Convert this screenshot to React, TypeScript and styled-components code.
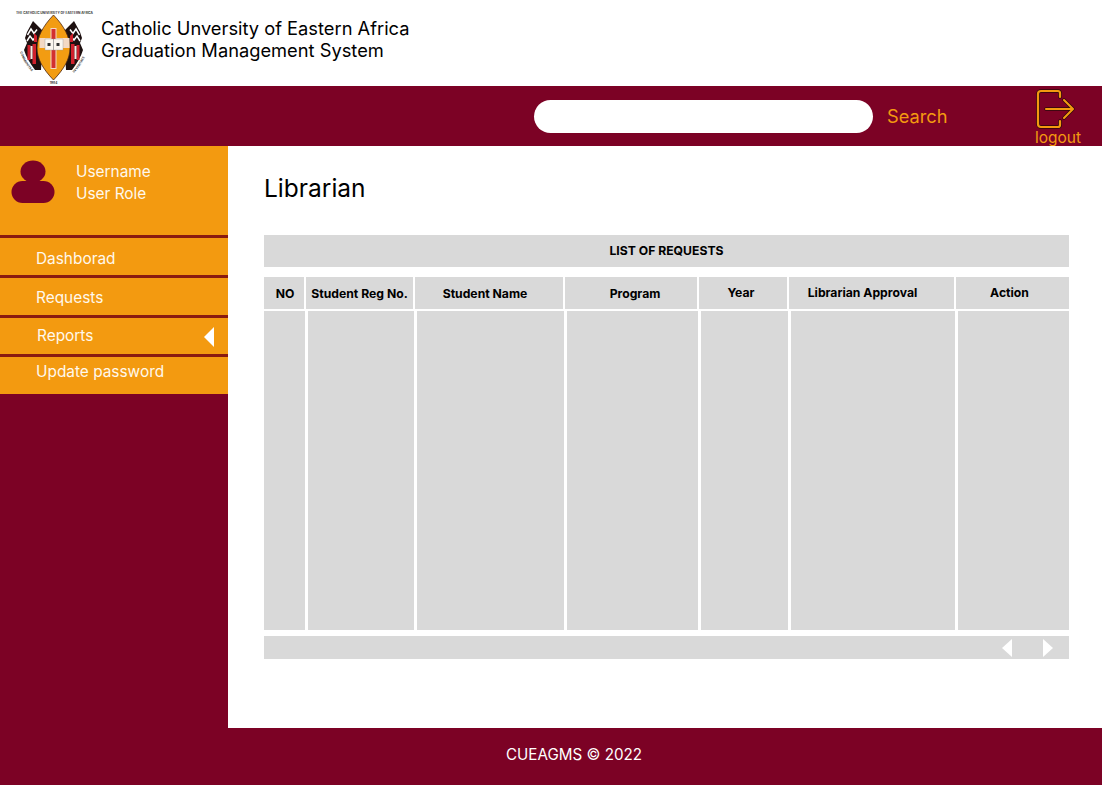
import styled, { createGlobalStyle } from "styled-components";

const MAROON = "#7c0225";
const ORANGE = "#f39a10";
const GREY = "#d9d9d9";

// shift = how far the label sits off the middle of its column, up = lifted label
const columns = [
  { label: "NO", shift: 1, up: false },
  { label: "Student Reg No.", shift: 0, up: false },
  { label: "Student Name", shift: -4, up: false },
  { label: "Program", shift: 4, up: false },
  { label: "Year", shift: -2, up: true },
  { label: "Librarian Approval", shift: -9, up: true },
  { label: "Action", shift: -3, up: true },
];

const menu = [
  { label: "Dashborad", height: 40, top: 11, left: 36 },
  { label: "Requests", height: 40, top: 10, left: 36 },
  { label: "Reports", height: 39, top: 8, left: 37 },
  { label: "Update password", height: 40, top: 5, left: 36 },
];

function Wing() {
  return (
    <g>
      <path d="M21 13l10 10-2 39h-6C18 55 14 49 12 42l3-7-2-5 2-6z" fill="#1d1010" />
      <path d="M15.5 27l3.5-6 3 4.5 3-4" fill="none" stroke="#fff" strokeWidth="1.5" />
      <path d="M15 33l3-5 3 4 3.5-4" fill="none" stroke="#fff" strokeWidth="1.5" />
      <path d="M15.5 37h3v15h-3zM20.5 36H24v20h-3.5z" fill="#d0202c" />
      <path d="M18.5 38h2v13h-2z" fill="#f3ece4" />
      <path d="M22 25l3 3v6h-3z" fill="#d0202c" />
    </g>
  );
}

function Logo() {
  return (
    <svg width="84" height="76" viewBox="0 0 84 76">
      <text x="4" y="6" textLength="77" lengthAdjust="spacingAndGlyphs" fontSize="2.9" fontWeight="700" fontFamily="Inter, sans-serif" fill="#333">
        THE CATHOLIC UNIVERSITY OF EASTERN AFRICA
      </text>
      <defs>
        <path id="leftArc" d="M8 44C11 52 15 59 21 65" />
        <path id="rightArc" d="M62 65C68 59 72 52 75 44" />
      </defs>
      <text fontSize="3.2" fontWeight="700" fontFamily="Inter, sans-serif" fill="#444">
        <textPath href="#leftArc">COMMUNITAS</textPath>
      </text>
      <text fontSize="3.2" fontWeight="700" fontFamily="Inter, sans-serif" fill="#444">
        <textPath href="#rightArc">IN VERITATE</textPath>
      </text>
      <Wing />
      <g transform="translate(83 0) scale(-1 1)">
        <Wing />
      </g>
      <path d="M41.5 7C31 18 25 29 25 40s6 21 16.5 32C52 61 58 51 58 40S52 18 41.5 7z" fill="#f29c12" stroke="#4a2410" strokeWidth=".8" />
      <path d="M38.5 20h6v10h13v10h-13v21h-6V40h-11V30h11z" fill="#f3d9c4" />
      <path d="M39.5 21h4v39h-4z" fill="#d3302f" />
      <path d="M33 31h18v11H33z" fill="#fbf7f0" stroke="#999" strokeWidth=".4" />
      <path d="M41.5 31v11" stroke="#777" strokeWidth=".6" />
      <path d="M35.5 35h3v3h-3zM44.5 35h3v3h-3z" fill="#333" />
      <text x="41.5" y="75.5" textAnchor="middle" fontSize="3.2" fontWeight="700" fontFamily="Inter, sans-serif" fill="#333">
        1984
      </text>
    </svg>
  );
}

function UserIcon() {
  return (
    <svg width="44" height="44" viewBox="0 0 44 44">
      <ellipse cx="22" cy="11.5" rx="12.5" ry="11" fill={MAROON} />
      <rect x="0.5" y="21" width="43" height="22" rx="11" fill={MAROON} />
    </svg>
  );
}

function LogoutIcon() {
  const door = "M24 8V4a2 2 0 0 0-2-2H5a3 3 0 0 0-3 3v30a3 3 0 0 0 3 3h17a2 2 0 0 0 2-2v-4";
  const arrow = "M10 20h26M28 11l9 9-9 9";
  return (
    <svg width="40" height="40" viewBox="0 0 40 40">
      <path d={door} fill="none" stroke="#2b0a0a" strokeWidth="3.6" strokeLinecap="round" />
      <path d={arrow} fill="none" stroke="#2b0a0a" strokeWidth="3.4" strokeLinecap="round" strokeLinejoin="round" />
      <path d={door} fill="none" stroke={ORANGE} strokeWidth="2.2" strokeLinecap="round" />
      <path d={arrow} fill="none" stroke={ORANGE} strokeWidth="2.1" strokeLinecap="round" strokeLinejoin="round" />
    </svg>
  );
}

export default function App() {
  return (
    <>
      <GlobalStyle />
      <Page>
        <Header>
          <LogoBox>
            <Logo />
          </LogoBox>
          <Brand>
            Catholic Unversity of Eastern Africa
            <br />
            Graduation Management System
          </Brand>
        </Header>
        <TopBar>
          <SearchInput />
          <SearchLabel>Search</SearchLabel>
          <Logout>
            <LogoutIcon />
            <span>logout</span>
          </Logout>
        </TopBar>
        <Body>
          <Sidebar>
            <Profile>
              <UserIcon />
              <ProfileText>
                Username
                <br />
                User Role
              </ProfileText>
            </Profile>
            <Menu>
              {menu.map((item) => (
                <MenuItem key={item.label} $height={item.height} $top={item.top} $left={item.left}>
                  {item.label}
                  {item.label === "Reports" && <ReportsArrow />}
                </MenuItem>
              ))}
            </Menu>
          </Sidebar>
          <Main>
            <Title>Librarian</Title>
            <ListBar>LIST OF REQUESTS</ListBar>
            <HeadRow>
              {columns.map((c) => (
                <HeadCell key={c.label} $shift={c.shift} $up={c.up}>
                  {c.label}
                </HeadCell>
              ))}
            </HeadRow>
            <BodyRow>
              {columns.map((c) => (
                <BodyCell key={c.label} />
              ))}
            </BodyRow>
            <Pager>
              <PagerLeft />
              <PagerRight />
            </Pager>
          </Main>
        </Body>
        <Footer>CUEAGMS © 2022</Footer>
      </Page>
    </>
  );
}

const GlobalStyle = createGlobalStyle`
  html, body {
    margin: 0;
    padding: 0;
    background: #fff;
  }
  * {
    box-sizing: border-box;
  }
`;

const Page = styled.div`
  width: 1102px;
  height: 785px;
  display: flex;
  flex-direction: column;
  overflow: hidden;
  font-family: Inter, "Liberation Sans", sans-serif;
`;

const Header = styled.header`
  height: 86px;
  display: flex;
  align-items: center;
  background: #fff;
`;

const LogoBox = styled.div`
  width: 101px;
  height: 82px;
  padding: 6px 0 0 12px;
`;

const Brand = styled.div`
  font-size: 18.3px;
  line-height: 22.5px;
  color: #000;
  margin-top: -8px;
`;

const TopBar = styled.div`
  height: 60px;
  display: flex;
  align-items: center;
  background: ${MAROON};
  padding-left: 534px;
`;

const SearchInput = styled.div`
  width: 339px;
  height: 33px;
  border-radius: 17px;
  background: #fff;
`;

const SearchLabel = styled.div`
  width: 148px;
  padding-left: 14px;
  font-size: 18.25px;
  color: ${ORANGE};
`;

const Logout = styled.div`
  display: flex;
  flex-direction: column;
  align-items: flex-start;
  margin-top: 4px;
  font-size: 15.5px;
  line-height: 19px;
  color: ${ORANGE};

  svg {
    display: block;
    margin-left: 15px;
  }
  span {
    margin-left: 14px;
    margin-top: -1px;
  }
`;

const Body = styled.div`
  flex: 1;
  display: flex;
  min-height: 0;
`;

const Sidebar = styled.aside`
  width: 228px;
  background: ${MAROON};
`;

const Profile = styled.div`
  height: 89px;
  display: flex;
  align-items: flex-start;
  gap: 21px;
  padding: 14px 0 0 11px;
  background: ${ORANGE};
`;

const ProfileText = styled.div`
  margin-top: 1px;
  font-size: 15.4px;
  line-height: 22px;
  color: #fff8ec;
`;

const Menu = styled.nav`
  display: flex;
  flex-direction: column;
  background: ${ORANGE};
`;

const MenuItem = styled.div<{ $height: number; $top: number; $left: number }>`
  height: ${(p) => p.$height}px;
  display: flex;
  align-items: flex-start;
  justify-content: space-between;
  padding: ${(p) => p.$top}px 14px 0 ${(p) => p.$left}px;
  border-top: 3px solid #8a1a10;
  font-size: 15.4px;
  line-height: 20px;
  color: #fff8ec;
`;

const ReportsArrow = styled.span`
  width: 0;
  height: 0;
  margin-top: 1px;
  border-style: solid;
  border-width: 10px 10px 10px 0;
  border-color: transparent #fff transparent transparent;
`;

const Main = styled.main`
  flex: 1;
  background: #fff;
  padding: 0 33px 0 36px;
`;

const Title = styled.h1`
  margin: 0;
  padding-top: 27px;
  height: 89px;
  font-size: 24.5px;
  line-height: 30px;
  font-weight: 400;
  color: #000;
`;

const ListBar = styled.div`
  height: 32px;
  display: flex;
  align-items: center;
  justify-content: center;
  padding-bottom: 1px;
  background: ${GREY};
  font-size: 12.2px;
  font-weight: 700;
  color: #000;
`;

const HeadRow = styled.div`
  display: grid;
  grid-template-columns: 40px 107px 148px 132px 88px 165px 113px;
  column-gap: 2px;
  height: 32px;
  margin-top: 10px;
`;

const HeadCell = styled.div<{ $shift: number; $up: boolean }>`
  display: flex;
  align-items: center;
  justify-content: center;
  padding-left: ${(p) => Math.max(p.$shift, 0) * 2}px;
  padding-right: ${(p) => Math.max(-p.$shift, 0) * 2}px;
  padding-bottom: ${(p) => (p.$up ? 2 : 0)}px;
  background: ${GREY};
  font-size: 12.2px;
  font-weight: 700;
  color: #000;
  white-space: nowrap;
`;

const BodyRow = styled.div`
  display: grid;
  grid-template-columns: 41px 106px 147px 131px 87px 164px 111px;
  column-gap: 3px;
  height: 319px;
  margin-top: 2px;
`;

const BodyCell = styled.div`
  background: ${GREY};
`;

const Pager = styled.div`
  height: 23px;
  margin-top: 6px;
  display: flex;
  align-items: center;
  justify-content: flex-end;
  gap: 31px;
  padding-right: 16px;
  background: ${GREY};
`;

const PagerLeft = styled.span`
  width: 0;
  height: 0;
  border-style: solid;
  border-width: 9px 10px 9px 0;
  border-color: transparent #fff transparent transparent;
`;

const PagerRight = styled.span`
  width: 0;
  height: 0;
  border-style: solid;
  border-width: 9px 0 9px 10px;
  border-color: transparent transparent transparent #fff;
`;

const Footer = styled.footer`
  height: 57px;
  display: flex;
  align-items: center;
  justify-content: center;
  padding: 0 0 4px 46px;
  background: ${MAROON};
  font-size: 15.2px;
  color: #fff;
`;
